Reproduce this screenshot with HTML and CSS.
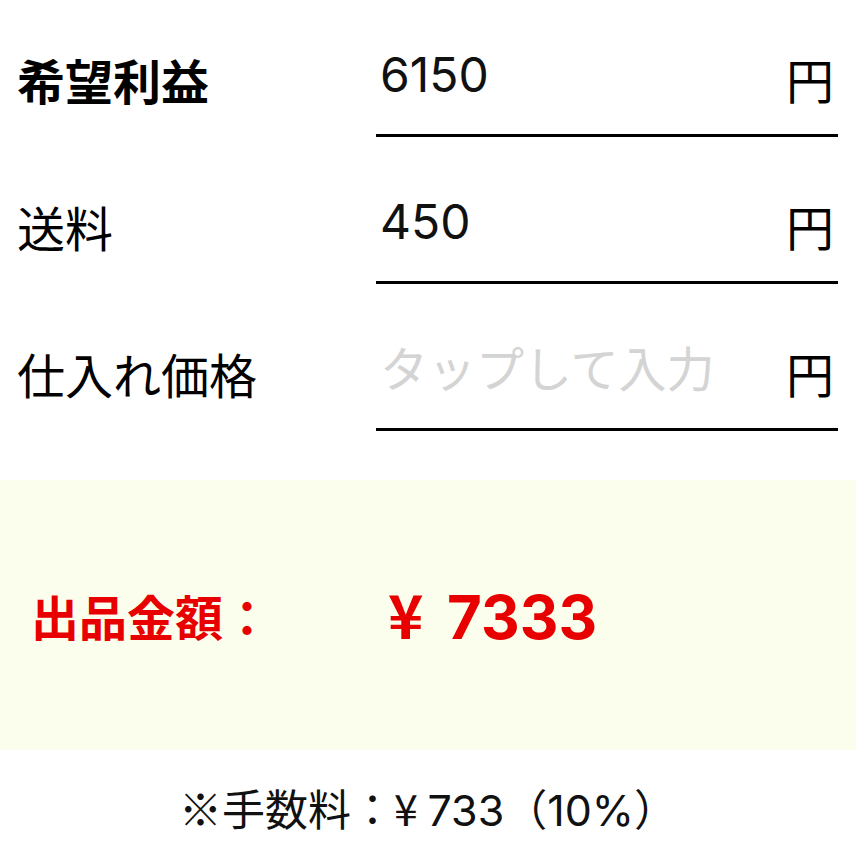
FILE: index.html
```html
<!DOCTYPE html>
<html lang="ja">
<head>
<meta charset="utf-8">
<title>出品金額</title>
<link rel="stylesheet" href="styles.css">
</head>
<body>
<div class="form">
  <div class="row">
    <div class="label bold">希望利益</div>
    <div class="field">
      <div class="value">6150</div>
      <div class="unit">円</div>
    </div>
  </div>
  <div class="row">
    <div class="label">送料</div>
    <div class="field">
      <div class="value">450</div>
      <div class="unit">円</div>
    </div>
  </div>
  <div class="row">
    <div class="label">仕入れ価格</div>
    <div class="field">
      <div class="value placeholder">タップして入力</div>
      <div class="unit">円</div>
    </div>
  </div>
</div>
<div class="result">
  <div class="result-label">出品金額：</div>
  <div class="result-value">¥ <span class="num amount">7333</span></div>
</div>
<div class="fee">※手数料：¥ <span class="num">733</span>（<span class="num">10%</span>）</div>
</body>
</html>
```
FILE: styles.css
```css
html, body {
  margin: 0;
  padding: 0;
  background: #ffffff;
}
body {
  font-family: "Noto Sans CJK JP", sans-serif;
  color: #000;
  width: 856px;
}
.num {
  font-family: Inter, "Noto Sans CJK JP", sans-serif;
}
.form {
  display: flex;
  flex-direction: column;
}
.row {
  display: flex;
  height: 137px;
  margin-bottom: 10px;
}
.label {
  width: 359px;
  margin-left: 17px;
  padding-top: 50px;
  font-size: 48px;
  line-height: 58px;
  box-sizing: border-box;
}
.bold {
  font-weight: 700;
}
.field {
  flex: 1;
  margin-right: 18px;
  height: 137px;
  box-sizing: border-box;
  border-bottom: 3px solid #000;
  display: flex;
  justify-content: space-between;
  align-items: flex-start;
  padding-left: 4px;
  padding-right: 4px;
}
.value {
  padding-top: 46px;
  font-family: Inter, "Noto Sans CJK JP", sans-serif;
  font-size: 48px;
  line-height: 58px;
  color: #111;
}
.placeholder {
  font-family: "Noto Sans CJK JP", sans-serif;
  color: #d4d4d4;
  padding-top: 43px;
}
.unit {
  padding-top: 49px;
  font-size: 48px;
  line-height: 58px;
}
.result {
  margin-top: 39px;
  height: 270px;
  background: #fbfeed;
  display: flex;
  align-items: center;
  padding-left: 31px;
  color: #e80000;
  font-weight: 700;
}
.result-label {
  width: 357px;
  font-size: 48px;
  line-height: 58px;
}
.result-value {
  font-size: 60px;
  line-height: 70px;
}
.amount {
  margin-left: 10px;
}
.fee {
  margin-top: 32px;
  text-align: center;
  font-size: 43px;
  line-height: 50px;
  color: #111;
}
```
